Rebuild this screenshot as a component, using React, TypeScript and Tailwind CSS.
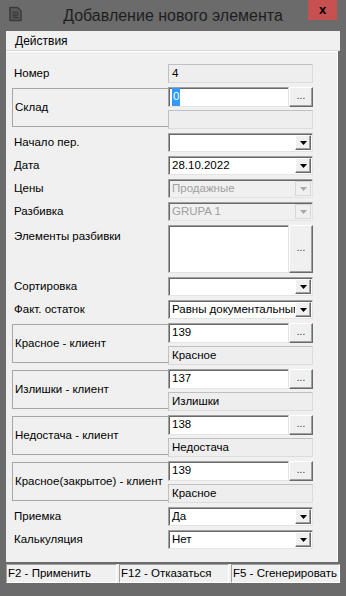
import React from "react";

const sunken =
  "border border-t-[#a0a0a0] border-l-[#a0a0a0] border-r-[#e3e3e3] border-b-[#e3e3e3] shadow-[inset_1px_1px_0_#696969]";
const raised =
  "border border-t-[#ffffff] border-l-[#ffffff] border-r-[#696969] border-b-[#696969] shadow-[inset_-1px_-1px_0_#a0a0a0]";

function DotsButton({ tall }: { tall?: boolean }) {
  return (
    <div
      className={`w-[24px] ${tall ? "h-[48px]" : "h-[20px]"} ${raised} bg-[#f0f0f0] flex items-center justify-center text-[10px] leading-none text-[#333] pb-[2px]`}
    >
      ...
    </div>
  );
}

function TextField({ children }: { children?: React.ReactNode }) {
  return (
    <div className="flex h-[20px] w-[145px]">
      <div className={`w-[121px] h-[20px] bg-white ${sunken} flex items-center pl-[3px] overflow-hidden whitespace-nowrap`}>
        {children}
      </div>
      <DotsButton />
    </div>
  );
}

function ReadField({ value }: { value?: string }) {
  return (
    <div className="w-[145px] h-[19px] bg-[#eeeeee] border border-t-[#c0c0c0] border-l-[#c0c0c0] border-r-[#dcdcdc] border-b-[#dcdcdc] flex items-center pl-[3px] whitespace-nowrap">
      {value}
    </div>
  );
}

function Arrow({ disabled }: { disabled?: boolean }) {
  return (
    <svg width="7" height="4" viewBox="0 0 7 4">
      <path d="M0 0 H7 L3.5 4 Z" fill={disabled ? "#a8a8a8" : "#000"} />
    </svg>
  );
}

function Combo({ value, disabled }: { value?: string; disabled?: boolean }) {
  return (
    <div
      className={`relative w-[145px] h-[19px] ${disabled ? "bg-[#f0f0f0] text-[#a0a0a0]" : "bg-white text-black"} ${sunken} flex items-center pl-[3px] overflow-hidden whitespace-nowrap`}
    >
      <span className="pr-[16px]">{value}</span>
      <div
        className={`absolute right-[1px] top-[1px] bottom-[1px] w-[16px] bg-[#f0f0f0] flex items-center justify-center ${disabled ? "border border-[#d8d8d8]" : raised}`}
      >
        <Arrow disabled={disabled} />
      </div>
    </div>
  );
}

function Row({ label, children }: { label: string; children: React.ReactNode }) {
  return (
    <div className="flex items-center h-[19px]">
      <div className="w-[162px] pl-[8px] whitespace-nowrap">{label}</div>
      {children}
    </div>
  );
}

function GroupRow({ label, code, name, selected }: { label: string; code: string; name: string; selected?: boolean }) {
  return (
    <div className="flex h-[42px]">
      <div className="w-[162px] pl-[6px] pt-[1px]">
        <div className="h-[39px] border border-r-0 border-[#a6a6a6] flex items-center pl-[2px] whitespace-nowrap overflow-hidden">
          {label}
        </div>
      </div>
      <div className="flex flex-col gap-[3px]">
        <TextField>
          {selected ? <span className="bg-[#3399ff] text-white px-[1px]">{code}</span> : code}
        </TextField>
        <ReadField value={name} />
      </div>
    </div>
  );
}

function DocIcon() {
  return (
    <svg width="15" height="16" viewBox="0 0 15 16">
      <path d="M2 1.5 H9.5 L13 5 V14.5 H2 Z" fill="#5a5a5a" stroke="#3a3a3a" strokeWidth="1.5" strokeLinejoin="round" />
      <path d="M4.5 6.5 H10.5 M4.5 9 H10.5 M4.5 11.5 H10.5" stroke="#3a3a3a" strokeWidth="1.3" />
    </svg>
  );
}

export default function App() {
  return (
    <div
      className="w-[346px] h-[596px] bg-[#6b6b6b] flex flex-col text-[11.5px] text-black overflow-hidden"
      style={{ fontFamily: '"Liberation Sans", Arial, sans-serif' }}
    >
      <div className="relative h-[31px] flex items-center justify-center">
        <div className="absolute left-[8px] top-[6px]">
          <DocIcon />
        </div>
        <span className="text-[16px] text-[#1e1e1e]">Добавление нового элемента</span>
        <div className="absolute right-[9px] top-0 w-[29px] h-[20px] bg-[#c75050] flex items-center justify-center text-[13px] font-bold text-black leading-none pb-[2px]">
          x
        </div>
      </div>

      <div className="mx-[6px] h-[20px] bg-[#f0f0f0] flex items-center pl-[9px] border-b border-[#d6d6d6] text-[12px]">
        Действия
      </div>

      <div className="ml-[6px] mr-[8px] h-[511px] bg-[#f0f0f0] border-t border-r border-white flex flex-col gap-[4px] pt-[12px]">
        <Row label="Номер">
          <ReadField value="4" />
        </Row>
        <GroupRow label="Склад" code="0" name="" selected />
        <Row label="Начало пер.">
          <Combo />
        </Row>
        <Row label="Дата">
          <Combo value="28.10.2022" />
        </Row>
        <Row label="Цены">
          <Combo value="Продажные" disabled />
        </Row>
        <Row label="Разбивка">
          <Combo value="GRUPA 1" disabled />
        </Row>
        <div className="flex h-[48px]">
          <div className="w-[162px] pl-[8px] pt-[3px]">Элементы разбивки</div>
          <div className={`w-[121px] h-[48px] bg-white ${sunken}`} />
          <DotsButton tall />
        </div>
        <Row label="Сортировка">
          <Combo />
        </Row>
        <Row label="Факт. остаток">
          <Combo value="Равны документальным" />
        </Row>
        <GroupRow label="Красное - клиент" code="139" name="Красное" />
        <GroupRow label="Излишки - клиент" code="137" name="Излишки" />
        <GroupRow label="Недостача - клиент" code="138" name="Недостача" />
        <GroupRow label="Красное(закрытое) - клиент" code="139" name="Красное" />
        <Row label="Приемка">
          <Combo value="Да" />
        </Row>
        <Row label="Калькуляция">
          <Combo value="Нет" />
        </Row>
      </div>

      <div className="mx-[6px] mt-[2px] h-[19px] bg-[#f0f0f0] flex gap-[2px]">
        {["F2 - Применить", "F12 - Отказаться", "F5 - Сгенерировать"].map((t, i) => (
          <div
            key={t}
            className={`${i === 0 ? "w-[111px]" : i === 1 ? "w-[110px]" : "flex-1"} h-[19px] border border-t-[#a0a0a0] border-l-[#a0a0a0] border-r-white border-b-white flex items-center pl-[1px] whitespace-nowrap overflow-hidden`}
          >
            {t}
          </div>
        ))}
      </div>
    </div>
  );
}
